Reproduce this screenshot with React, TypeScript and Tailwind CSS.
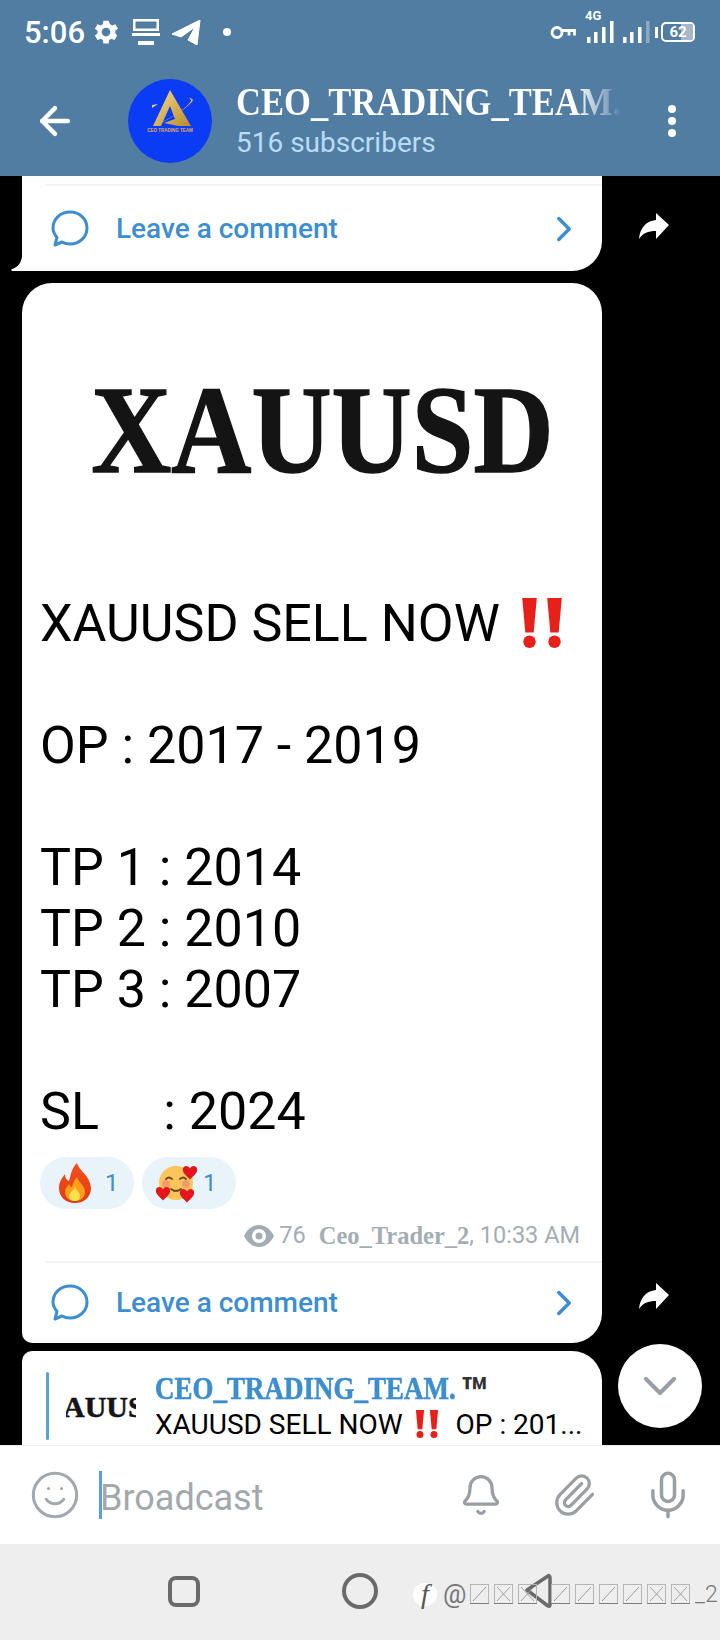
import { ArrowLeft, ChevronDown, ChevronRight, Smile, Bell, Paperclip, Mic } from 'lucide-react';

const roboto = "font-['Roboto',sans-serif]";
const serif = "font-['Liberation_Serif',serif]";

function Gear() {
  return (
    <svg width="30" height="30" viewBox="0 0 24 24" fill="white">
      <path fillRule="evenodd" d="M19.4 13a7.6 7.6 0 0 0 0-2l2.2-1.7-2.1-3.6-2.6 1a7.6 7.6 0 0 0-1.7-1L14.1 2.9H9.9l-.4 2.8a7.6 7.6 0 0 0-1.7 1l-2.6-1-2.1 3.6L5.3 11a7.6 7.6 0 0 0 0 2l-2.2 1.7 2.1 3.6 2.6-1a7.6 7.6 0 0 0 1.7 1l.4 2.8h4.2l.4-2.8a7.6 7.6 0 0 0 1.7-1l2.6 1 2.1-3.6zM12 15.5a3.5 3.5 0 1 1 0-7 3.5 3.5 0 0 1 0 7z" />
    </svg>
  );
}

function Monitor() {
  return (
    <svg width="28" height="27" viewBox="0 0 28 27" fill="white">
      <path fillRule="evenodd" d="M1 0h26v12H1zM3.500 2.500v7h21v-7z" />
      <rect x="0" y="14" width="28" height="3" />
      <rect x="6" y="22" width="16" height="4" />
    </svg>
  );
}

function Plane() {
  return (
    <svg width="29" height="25" viewBox="0 0 29 25" fill="white">
      <path d="M0 14 28 0l-3 25-9-5 7-13-14 10z" strokeLinejoin="round" stroke="white" strokeWidth="1" />
    </svg>
  );
}

function Key() {
  return (
    <svg width="26" height="15" viewBox="0 0 26 15" fill="none" stroke="white" strokeWidth="2.800">
      <circle cx="7" cy="7.500" r="5" />
      <path d="M12 5.500h12.500v5M19 5.500v5" />
    </svg>
  );
}

function Signal({ fourth }: { fourth: string }) {
  return (
    <svg width="27" height="22" viewBox="0 0 27 22">
      <rect x="0" y="16" width="3.500" height="6" fill="white" />
      <rect x="7" y="11" width="3.500" height="11" fill="white" />
      <rect x="15" y="6" width="3.500" height="16" fill="white" />
      <rect x="23" y="0" width="3.500" height="22" fill={fourth} />
    </svg>
  );
}

function Battery() {
  return (
    <div className="relative flex h-[20px] w-[34px] items-center justify-center overflow-hidden rounded-[5px] border-2 border-white">
      <div className="absolute inset-y-0 right-0 w-[12px] bg-[#a9b8c9]" />
      <span className={`relative text-[15px] font-bold leading-none text-white ${roboto}`}>62</span>
    </div>
  );
}

function StatusBar() {
  return (
    <div className="flex h-[60px] items-center justify-between pl-[24px] pr-[25px] pt-[4px]">
      <div className="flex items-center">
        <span className={`text-[31px] font-medium leading-none text-white ${roboto}`}>5:06</span>
        <div className="ml-[6px]"><Gear /></div>
        <div className="ml-[11px]"><Monitor /></div>
        <div className="ml-[12px]"><Plane /></div>
        <div className="ml-[22px] h-[8px] w-[8px] rounded-full bg-white" />
      </div>
      <div className="flex items-center">
        <Key />
        <div className="relative ml-[11px]">
          <span className={`absolute -top-[12px] left-[-2px] text-[13px] font-bold leading-none text-white ${roboto}`}>4G</span>
          <Signal fourth="white" />
        </div>
        <div className="ml-[9px]"><Signal fourth="#8fa9c4" /></div>
        <div className="ml-[5px] mr-[3px] h-[11px] w-[3px] bg-white" />
        <Battery />
      </div>
    </div>
  );
}

function Avatar() {
  return (
    <div className="flex h-[84px] w-[84px] shrink-0 items-center justify-center rounded-full bg-[#0a3cf5]">
      <svg width="84" height="84" viewBox="0 0 84 84">
        <defs>
          <linearGradient id="gold" x1="0" y1="0" x2="1" y2="1">
            <stop offset="0" stopColor="#f5dc8a" />
            <stop offset="1" stopColor="#b98a2c" />
          </linearGradient>
        </defs>
        <path d="M42 11 25 47h8l9-20 5 13-11 4 14 3h13z" fill="url(#gold)" />
        <path d="M24 47c14-4 30-14 40-24 2-3 0-4-6-5 3 0 5 2 5 4-6 9-24 20-39 25z" fill="#d9b04f" />
        <path d="M24 26l6-1-6 4z" fill="#e9cf7c" />
        <text x="42" y="53" textAnchor="middle" fontSize="4.500" fontWeight="700" fill="#e8a860" fontFamily="Liberation Sans">CEO TRADING TEAM</text>
      </svg>
    </div>
  );
}

function Toolbar() {
  return (
    <div className="flex h-[116px] items-center pl-[33px] pr-[44px] pt-[6px]">
      <ArrowLeft size={44} color="white" strokeWidth={2.400} />
      <div className="ml-[51px]"><Avatar /></div>
      <div className="ml-[24px] min-w-0 flex-1">
        <div className={`-mt-[3px] w-[386px] origin-left scale-y-[1.15] overflow-hidden whitespace-nowrap bg-linear-to-r from-white from-[88%] to-transparent bg-clip-text text-[34.600px] font-bold leading-[44px] text-transparent ${serif}`}>
          CEO_TRADING_TEAM.
        </div>
        <div className={`mt-[3px] text-[28px] leading-[34px] text-[#b8dcf5] ${roboto}`}>516 subscribers</div>
      </div>
      <div className="flex flex-col gap-[4px]">
        <div className="h-[8px] w-[8px] rounded-full bg-white" />
        <div className="h-[8px] w-[8px] rounded-full bg-white" />
        <div className="h-[8px] w-[8px] rounded-full bg-white" />
      </div>
    </div>
  );
}

function ForwardBtn() {
  return (
    <svg width="30" height="27" viewBox="0 0 30 27" fill="white" className="ml-[37px] shrink-0">
      <path d="M17 0 30 12 17 26v-8C9 18 4 20 0 26 1 15 7 8 17 7z" />
    </svg>
  );
}

function CommentRow() {
  return (
    <div className="flex h-full items-center pl-[29px] pr-[17px]">
      <svg width="38" height="38" viewBox="0 0 38 38" fill="none" stroke="#3d8ecf" strokeWidth="3">
        <path d="M19 2c9.500 0 17 7 17 16s-7.500 16-17 16c-3 0-5.500-.5-8-2l-7 3 2-7.500C3.500 24.500 2 21.500 2 18 2 9 9.500 2 19 2z" strokeLinejoin="round" />
      </svg>
      <span className={`ml-[27px] flex-1 text-[28px] font-medium text-[#3d8ecf] ${roboto}`}>Leave a comment</span>
      <ChevronRight size={42} color="#3d8ecf" strokeWidth={2} />
    </div>
  );
}

function DoubleBang({ h }: { h: number }) {
  return (
    <svg width={h} height={h} viewBox="0 0 48 48" className="inline-block align-[-0.14em]">
      <path d="M5 0h14l-3 33H8zM29 0h14l-3 33h-8z" fill="#e8201a" />
      <circle cx="12" cy="42" r="6" fill="#e8201a" />
      <circle cx="36" cy="42" r="6" fill="#e8201a" />
    </svg>
  );
}

function Fire() {
  return (
    <svg width="34" height="40" viewBox="0 0 34 40">
      <defs>
        <linearGradient id="fire" x1="0" y1="0" x2="0" y2="1">
          <stop offset="0" stopColor="#f4511e" />
          <stop offset="1" stopColor="#e53915" />
        </linearGradient>
      </defs>
      <path d="M19 0c2 8 13 12 14 25 0 9-7 15-16 15S1 34 1 25c0-6 3-10 6-14 0 3 1 6 4 7C13 12 13 6 19 0z" fill="url(#fire)" />
      <path d="M19 14c1 5 8 8 8 15 0 6-5 9-10 9S7 35 7 29c0-3 2-6 4-8 1 2 2 3 3 3 1-4 2-7 5-10z" fill="#ff9f1a" />
      <path d="M17 24c1 3 5 5 5 9 0 3-2 5-5 5s-6-2-6-5c0-4 5-5 6-9z" fill="#ffe14d" />
    </svg>
  );
}

function LoveFace() {
  const heart = 'M0 -2C-1 -5 -6 -5 -6 -1 -6 2 -2 5 0 7 2 5 6 2 6 -1 6 -5 1 -5 0 -2z';
  return (
    <svg width="42" height="40" viewBox="0 0 42 40">
      <circle cx="20" cy="20" r="17" fill="#fbc55b" />
      <circle cx="10" cy="21" r="4" fill="#f59a6d" />
      <circle cx="30" cy="21" r="4" fill="#f59a6d" />
      <path d="M10 16q3-3 6 0M24 16q3-3 6 0M15 26q5 4 10 0" stroke="#6b4a1e" strokeWidth="1.800" fill="none" strokeLinecap="round" />
      <path d={heart} transform="translate(34 8) scale(1.200)" fill="#e3161e" />
      <path d={heart} transform="translate(7 29) scale(1.200)" fill="#e3161e" />
      <path d={heart} transform="translate(31 31) scale(1.200)" fill="#e3161e" />
    </svg>
  );
}

function Reaction({ children, pl }: { children: React.ReactNode; pl: string }) {
  return (
    <div className={`flex h-[52px] w-[94px] items-center rounded-full bg-[#e9f3fa] ${pl}`}>
      <div className="flex w-[47px] items-center">{children}</div>
      <span className={`text-[24px] text-[#3d8ecf] ${roboto}`}>1</span>
    </div>
  );
}

function EyeIcon() {
  return (
    <svg width="30" height="22" viewBox="0 0 30 22" fill="#a5adb4">
      <path fillRule="evenodd" d="M15 0C8 0 3 5 0 11c3 6 8 11 15 11s12-5 15-11C27 5 22 0 15 0zm0 18a7 7 0 1 1 0-14 7 7 0 0 1 0 14z" />
      <circle cx="15" cy="11" r="3.500" />
    </svg>
  );
}

function Post() {
  const lineCls = 'h-[61px] whitespace-pre';
  return (
    <div className="w-[580px] overflow-hidden rounded-b-[30px] rounded-bl-[10px] rounded-t-[30px] bg-white">
      <div className="flex h-[310px] items-center justify-center pb-[14px] pl-[20px]">
        <span className={`origin-center scale-x-[.895] text-[124px] font-bold leading-none text-[#141414] [-webkit-text-stroke:1.500px_#141414] ${serif}`}>XAUUSD</span>
      </div>
      <div className={`pl-[18px] text-[52px] leading-[61px] text-black ${roboto}`}>
        <div className={lineCls}>XAUUSD SELL NOW <span className="ml-[4px]"><DoubleBang h={50} /></span></div>
        <div className={lineCls}> </div>
        <div className={lineCls}>OP : 2017 - 2019</div>
        <div className={lineCls}> </div>
        <div className={lineCls}>TP 1 : 2014</div>
        <div className={lineCls}>TP 2 : 2010</div>
        <div className={lineCls}>TP 3 : 2007</div>
        <div className={lineCls}> </div>
        <div className={lineCls}>SL     : 2024</div>
      </div>
      <div className="mt-[15px] flex gap-[8px] pl-[18px]">
        <Reaction pl="pl-[18px]"><Fire /></Reaction>
        <Reaction pl="pl-[14px]"><LoveFace /></Reaction>
      </div>
      <div className={`mt-[11px] flex h-[32px] items-center justify-end pr-[22px] text-[23.500px] text-[#a5adb4] ${roboto}`}>
        <EyeIcon />
        <span className="ml-[5px]">76</span>
        <span className={`ml-[13px] text-[24.500px] font-bold ${serif}`}>Ceo_Trader_2</span>
        <span>, 10:33 AM</span>
      </div>
      <div className="ml-[23px] mt-[9px] h-[2px] bg-[#f0f2f3]" />
      <div className="h-[80px]"><CommentRow /></div>
    </div>
  );
}

function ReplyBubble() {
  return (
    <div className="h-[110px] w-[580px] overflow-hidden rounded-t-[30px] rounded-tl-[10px] bg-white">
      <div className="ml-[24px] mt-[21px] flex h-[68px]">
        <div className="w-[3px] rounded bg-[#5a9fd8]" />
        <div className="ml-[17px] flex h-[68px] w-[70px] items-center overflow-hidden">
          <span className={`-ml-[3px] whitespace-nowrap text-[30px] font-bold text-[#141414] [-webkit-text-stroke:0.500px_#141414] ${serif}`}>AUUSD</span>
        </div>
        <div className="ml-[19px] min-w-0 flex-1">
          <div className="flex h-[32px] items-center">
            <span className={`origin-left scale-y-[1.2] whitespace-nowrap text-[27px] font-bold leading-none text-[#3d8ecf] [-webkit-text-stroke:0.500px_#3d8ecf] ${serif}`}>CEO_TRADING_TEAM.</span>
            <span className={`ml-[4px] translate-y-[6px] text-[46px] font-bold leading-none text-[#333] ${roboto}`}>™</span>
          </div>
          <div className={`mt-[5px] whitespace-nowrap text-[28px] leading-[32px] text-black ${roboto}`}>
            XAUUSD SELL NOW <span className="ml-[3px]"><DoubleBang h={28} /></span><span className="ml-[15px]">OP : 201...</span>
          </div>
        </div>
      </div>
    </div>
  );
}

function Tofu({ heavy }: { heavy?: boolean }) {
  return (
    <svg width="19" height="20" viewBox="0 0 19 20" fill="none" stroke={heavy ? '#a0a0a0' : '#9a9a9a'} strokeWidth="1">
      <rect x="0.500" y="0.500" width="18" height="19" stroke="#b5b5b5" />
      <path d="M0 19.500h19" stroke="#7f7f7f" />
      <path d="M3 17 16 3" />
      {heavy && <path d="M3 3 16 17" />}
    </svg>
  );
}

function Watermark() {
  const boxes = [false, true, true, false, false, false, false, true, true];
  return (
    <div className="absolute bottom-[33px] left-[413px] flex items-center">
      <div className={`flex h-[23px] w-[24px] items-center justify-center rounded-full bg-white text-[28px] italic leading-none text-[#555] ${serif}`}>f</div>
      <span className={`ml-[6px] w-[27px] text-[26px] leading-none text-[#777] ${roboto}`}>@</span>
      {boxes.map((heavy, i) => (
        <div key={i} className={i === 2 ? 'mr-[14px]' : 'mr-[5px]'}>
          <Tofu heavy={heavy} />
        </div>
      ))}
      <span className={`text-[23px] font-light leading-none text-[#777] ${roboto}`}>_2</span>
    </div>
  );
}

function Composer() {
  return (
    <div className="flex h-[99px] shrink-0 items-center border-t border-[#eceff1] bg-white pl-[29px] pr-[26px]">
      <Smile size={52} color="#a3a8ac" strokeWidth={1.400} />
      <div className="ml-[18px] h-[48px] w-[3px] bg-[#5a9fd8]" />
      <span className={`-ml-[2px] flex-1 pt-[6px] text-[36px] text-[#a3a8ac] ${roboto}`}>Broadcast</span>
      <Bell size={44} color="#9a9fa3" strokeWidth={1.800} />
      <Paperclip size={46} color="#9a9fa3" strokeWidth={1.700} className="ml-[48px]" />
      <Mic size={52} color="#9a9fa3" strokeWidth={1.600} className="ml-[45px]" />
    </div>
  );
}

function NavBar() {
  return (
    <div className="relative flex h-[96px] shrink-0 items-center bg-[#eeeeee] pb-[2px] pl-[168px]">
      <div className="h-[31px] w-[32px] rounded-[8px] border-[4px] border-[#6a6a6a]" />
      <div className="ml-[142px] h-[36px] w-[36px] rounded-full border-[4px] border-[#6a6a6a]" />
      <svg width="28" height="36" viewBox="0 0 28 36" fill="none" stroke="#6a6a6a" strokeWidth="3.500" strokeLinejoin="round" className="ml-[146px]">
        <path d="M24 3 3 17l21 16c2 1 2-1 2-2V5c0-2-1-3-2-2z" />
      </svg>
      <Watermark />
    </div>
  );
}

export default function App() {
  return (
    <div className="flex h-[1640px] w-[720px] flex-col overflow-hidden bg-black">
      <div className="shrink-0 bg-[#527da3]">
        <StatusBar />
        <Toolbar />
      </div>
      <main className="relative min-h-0 flex-1 overflow-hidden bg-black pl-[22px]">
        <div className="flex items-end">
          <div className="relative flex h-[95px] w-[580px] flex-col rounded-b-[30px] rounded-bl-none bg-white">
            <svg width="12" height="20" viewBox="0 0 12 20" fill="white" className="absolute -left-[11px] bottom-0">
              <path d="M11.500 0C11.500 10 8 16 1 18 0 19 0 20 2 20H12V0z" />
            </svg>
            <div className="ml-[23px] h-[10px] shrink-0 border-b-2 border-[#f0f2f3]" />
            <div className="min-h-0 flex-1"><CommentRow /></div>
          </div>
          <div className="mb-[31px]"><ForwardBtn /></div>
        </div>
        <div className="mt-[12px] flex items-end">
          <Post />
          <div className="mb-[33px]"><ForwardBtn /></div>
        </div>
        <div className="mt-[8px]"><ReplyBubble /></div>
        <div className="absolute left-[618px] top-[1168px] flex h-[84px] w-[84px] items-center justify-center rounded-full bg-white">
          <ChevronDown size={56} color="#9a9fa3" strokeWidth={1.800} />
        </div>
      </main>
      <Composer />
      <NavBar />
    </div>
  );
}
